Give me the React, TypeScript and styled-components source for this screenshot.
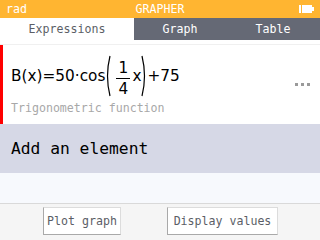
import React from "react";
import styled, { createGlobalStyle } from "styled-components";

const GlobalStyle = createGlobalStyle`
  html, body {
    margin: 0;
    padding: 0;
    background: #ffffff;
  }
`;

const MONO = `"DejaVu Sans Mono", "Liberation Mono", monospace`;
const SANS = `"DejaVu Sans", "Liberation Sans", sans-serif`;

const Screen = styled.div`
  width: 320px;
  height: 240px;
  display: flex;
  flex-direction: column;
  overflow: hidden;
  background: #ffffff;
`;

const TitleBar = styled.div`
  height: 18px;
  background: #ffb531;
  display: grid;
  grid-template-columns: 1fr auto 1fr;
  align-items: center;
  padding: 0 6px;
  color: #ffffff;
  font-family: ${MONO};
  font-size: 11.6px;
`;

const TitleRight = styled.div`
  display: flex;
  justify-content: flex-end;
`;

const Tabs = styled.div`
  height: 22px;
  display: grid;
  grid-template-columns: 134px 92px 94px;
  background: #656975;
`;

const Tab = styled.div<{ $active?: boolean }>`
  display: flex;
  align-items: center;
  justify-content: center;
  font-family: ${MONO};
  font-size: 11.6px;
  background: ${(p) => (p.$active ? "#ffffff" : "#656975")};
  color: ${(p) => (p.$active ? "#5b5e66" : "#ffffff")};
`;

const Gap = styled.div`
  height: 4px;
  border-bottom: 1px solid #f0f0f0;
`;

const ExpressionRow = styled.div`
  height: 79px;
  display: flex;
  border-left: 3px solid #ff0000;
  padding-left: 8px;
  padding-right: 10px;
`;

const ExpressionBody = styled.div`
  flex: 1;
  display: flex;
  flex-direction: column;
  padding-top: 10px;
`;

const Formula = styled.div`
  display: flex;
  align-items: center;
  height: 42px;
  font-family: ${SANS};
  font-size: 15.3px;
  color: #000000;
`;

const Fraction = styled.span`
  display: inline-flex;
  flex-direction: column;
  align-items: center;
  margin: 0 2px 0 5px;
  padding-top: 4px;
  line-height: 14px;
`;

const FractionBar = styled.span`
  width: 14px;
  height: 1px;
  background: #000000;
  margin: 3px 0 3px;
`;

const Subtitle = styled.div`
  margin-top: 4px;
  font-family: ${MONO};
  font-size: 11.6px;
  color: #a8a8a8;
`;

const More = styled.div`
  align-self: center;
  display: flex;
  gap: 3px;
`;

const Dot = styled.span`
  width: 3px;
  height: 3px;
  background: #9a9a9a;
`;

const AddRow = styled.div`
  height: 49px;
  background: #d6d8e6;
  display: flex;
  align-items: center;
  padding-left: 11px;
  font-family: ${MONO};
  font-size: 16.3px;
  color: #000000;
`;

const Filler = styled.div`
  height: 30px;
  background: #f7f9fd;
  border-bottom: 1px solid #d9d9d9;
`;

const ButtonBar = styled.div`
  flex: 1;
  background: #f5f5f5;
  display: flex;
  justify-content: center;
  align-items: flex-start;
  gap: 46px;
  padding-top: 3px;
  padding-left: 1px;
`;

const Button = styled.div<{ $width: number }>`
  width: ${(p) => p.$width}px;
  height: 28px;
  box-sizing: border-box;
  background: #ffffff;
  border-top: 1px solid #dcdcdc;
  border-right: 1px solid #dcdcdc;
  border-left: 1px solid #a9a9a9;
  border-bottom: 1px solid #a9a9a9;
  display: flex;
  align-items: center;
  justify-content: center;
  font-family: ${MONO};
  font-size: 11.6px;
  color: #5b5e66;
`;

function Battery() {
  return (
    <svg width="15" height="8" viewBox="0 0 15 8">
      <rect x="0" y="0" width="2" height="8" fill="#fff" />
      <rect x="3" y="0" width="10" height="8" fill="#fff" />
      <rect x="13" y="2" width="2" height="4" fill="#fff" />
    </svg>
  );
}

function Paren({ right }: { right?: boolean }) {
  const d = right ? "M1 1 Q6 21 1 41" : "M5 1 Q0 21 5 41";
  return (
    <svg width="6" height="42" viewBox="0 0 6 42">
      <path d={d} stroke="#000" strokeWidth="1.2" fill="none" />
    </svg>
  );
}

export default function App() {
  return (
    <Screen>
      <GlobalStyle />
      <TitleBar>
        <span>rad</span>
        <span>GRAPHER</span>
        <TitleRight>
          <Battery />
        </TitleRight>
      </TitleBar>
      <Tabs>
        <Tab $active>Expressions</Tab>
        <Tab>Graph</Tab>
        <Tab>Table</Tab>
      </Tabs>
      <Gap />
      <ExpressionRow>
        <ExpressionBody>
          <Formula>
            <span>B(x)=50·cos</span>
            <Paren />
            <Fraction>
              <span>1</span>
              <FractionBar />
              <span>4</span>
            </Fraction>
            <span>x</span>
            <Paren right />
            <span>+75</span>
          </Formula>
          <Subtitle>Trigonometric function</Subtitle>
        </ExpressionBody>
        <More>
          <Dot />
          <Dot />
          <Dot />
        </More>
      </ExpressionRow>
      <AddRow>Add an element</AddRow>
      <Filler />
      <ButtonBar>
        <Button $width={78}>Plot graph</Button>
        <Button $width={111}>Display values</Button>
      </ButtonBar>
    </Screen>
  );
}
